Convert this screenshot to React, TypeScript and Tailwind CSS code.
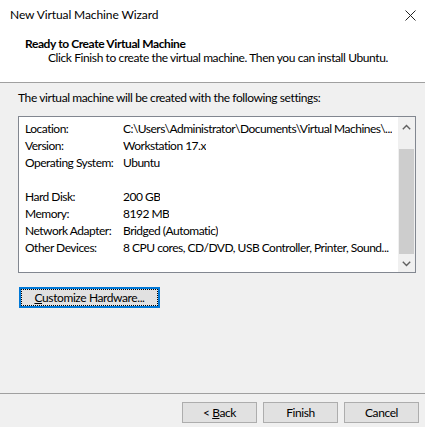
import React from 'react';

const rows: [string, string][] = [
  ['Location:', 'C:\\Users\\Administrator\\Documents\\Virtual Machines\\...'],
  ['Version:', 'Workstation 17.x'],
  ['Operating System:', 'Ubuntu'],
  ['', ''],
  ['Hard Disk:', '200 GB'],
  ['Memory:', '8192 MB'],
  ['Network Adapter:', 'Bridged (Automatic)'],
  ['Other Devices:', '8 CPU cores, CD/DVD, USB Controller, Printer, Sound...'],
];

function Chevron({ up }: { up?: boolean }) {
  return (
    <svg width="9" height="6" viewBox="0 0 9 6" className="block">
      <path
        d={up ? 'M0.8 5.2 L4.5 1.5 L8.2 5.2' : 'M0.8 0.8 L4.5 4.5 L8.2 0.8'}
        fill="none"
        stroke="#606060"
        strokeWidth="1.4"
      />
    </svg>
  );
}

function WizardButton({ children }: { children: React.ReactNode }) {
  return (
    <button className="w-[75px] h-[21px] bg-[#e1e1e1] border border-[#adadad] text-[12px] leading-[14px] text-black">
      {children}
    </button>
  );
}

function App() {
  return (
    <div
      className="w-[425px] h-[427px] bg-[#f0f0f0] flex flex-col text-black text-[12px] tracking-[-0.4px] overflow-hidden"
      style={{ fontFamily: 'Lato, "Noto Sans", sans-serif' }}
    >
      {/* title + page heading */}
      <div className="h-[83px] bg-white border-b border-[#a0a0a0] flex flex-col">
        <div className="h-[30px] flex items-center justify-between pl-[10px] pr-[9px]">
          <span className="leading-[14px] tracking-[-0.1px]">New Virtual Machine Wizard</span>
          <svg width="11" height="11" viewBox="0 0 11 11">
            <path d="M0.5 0.5 L10.5 10.5 M10.5 0.5 L0.5 10.5" stroke="#222" strokeWidth="1" />
          </svg>
        </div>
        <div className="pl-[25px] mt-[7px] font-bold leading-[14px]">Ready to Create Virtual Machine</div>
        <div className="pl-[48px] leading-[14px] whitespace-nowrap">
          Click Finish to create the virtual machine. Then you can install Ubuntu.
        </div>
      </div>

      <div className="pl-[18px] pr-[10px]">
        <div className="mt-[8px] leading-[14px]">The virtual machine will be created with the following settings:</div>

        {/* settings summary list */}
        <div className="mt-[11px] w-[398px] h-[157px] bg-white border border-[#828790] flex">
          <div className="flex-1 min-w-0 pt-[3px] pl-[6px] tracking-[-0.5px]">
            {rows.map(([label, value], i) => (
              <div key={i} className="h-[17px] flex items-center whitespace-nowrap">
                <span className="w-[98px] shrink-0">{label}</span>
                <span className="overflow-hidden">{value}</span>
              </div>
            ))}
          </div>
          <div className="w-[17px] bg-[#f0f0f0] flex flex-col items-center">
            <div className="h-[17px] w-full flex items-center justify-center mt-[1px]">
              <Chevron up />
            </div>
            <div className="mt-[14px] w-[15px] h-[105px] bg-[#cdcdcd]" />
            <div className="flex-1" />
            <div className="h-[17px] w-full flex items-center justify-center">
              <Chevron />
            </div>
          </div>
        </div>

        <button className="mt-[14px] ml-[1px] w-[141px] h-[21px] border border-[#0078d7] bg-[#e1e1e1] p-[1px] block shadow-[inset_0_0_0_1px_#0078d7]">
          <span className="flex h-full items-center justify-center border border-dotted border-black leading-[14px]">
            <span className="underline">C</span>ustomize Hardware...
          </span>
        </button>
      </div>

      {/* wizard navigation */}
      <div className="mt-auto h-[34px] border-t border-[#a0a0a0] flex justify-end gap-[6px] pt-[8px] pr-[6px]">
        <WizardButton>
          &lt; <span className="underline">B</span>ack
        </WizardButton>
        <WizardButton>Finish</WizardButton>
        <WizardButton>Cancel</WizardButton>
      </div>
    </div>
  );
}

export default App;
